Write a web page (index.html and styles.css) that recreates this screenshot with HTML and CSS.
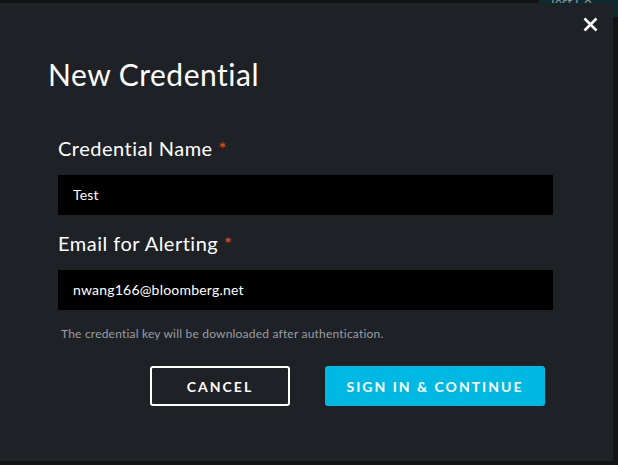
FILE: index.html
```html
<!DOCTYPE html>
<html>
<head>
<meta charset="utf-8">
<link rel="stylesheet" href="styles.css">
</head>
<body>
<div class="backdrop-tab"><span>Test Co</span></div>
<div class="modal">
  <button class="close" aria-label="Close">
    <svg width="15" height="15" viewBox="0 0 15 15"><path d="M1.5 1.5 L13.5 13.5 M13.5 1.5 L1.5 13.5" stroke="#fff" stroke-width="2.6" stroke-linecap="butt"/></svg>
  </button>
  <h1 class="title">New Credential</h1>
  <form class="form">
    <label class="label">Credential Name <span class="req">*</span></label>
    <div class="input">Test</div>
    <label class="label">Email for Alerting <span class="req">*</span></label>
    <div class="input">nwang166@bloomberg.net</div>
    <p class="hint">The credential key will be downloaded after authentication.</p>
    <div class="actions">
      <button type="button" class="btn btn-cancel">CANCEL</button>
      <button type="button" class="btn btn-primary">SIGN IN &amp; CONTINUE</button>
    </div>
  </form>
</div>
</body>
</html>
```
FILE: styles.css
```css
html, body {
  margin: 0;
  padding: 0;
  background: #111315;
  width: 618px;
  height: 465px;
  overflow: hidden;
  font-family: "Lato", "Open Sans", sans-serif;
  color: #fff;
}
.backdrop-tab {
  position: absolute;
  left: 539px;
  top: 0;
  width: 79px;
  height: 17px;
  background: #0f2a2e;
  overflow: hidden;
}
.backdrop-tab span {
  position: relative;
  top: -9px;
  left: 10px;
  font-size: 13px;
  color: #8a9699;
}
.modal {
  position: relative;
  margin-top: 3px;
  width: 613px;
  height: 458px;
  background: #1e2126;
  box-sizing: border-box;
  padding: 51px 48px 0 48px;
}
.close {
  position: absolute;
  right: 15px;
  top: 14px;
  width: 15px;
  height: 15px;
  padding: 0;
  border: 0;
  background: none;
  display: flex;
}
.title {
  margin: 0;
  font-size: 30px;
  font-weight: 400;
  line-height: 40px;
  letter-spacing: 0.5px;
}
.form {
  margin: 41px 0 0 10px;
  width: 495px;
  display: flex;
  flex-direction: column;
}
.label {
  font-size: 20px;
  line-height: 26px;
  margin-bottom: 14px;
  letter-spacing: 0.5px;
}
.req {
  color: #d9541f;
}
.input {
  height: 40px;
  background: #000;
  box-sizing: border-box;
  padding: 0 15px;
  font-size: 14px;
  line-height: 40px;
  letter-spacing: 0.2px;
  color: #fff;
  margin-bottom: 15px;
}
.hint {
  margin: 1px 0 0 3px;
  font-size: 12px;
  line-height: 15px;
  letter-spacing: 0.2px;
  color: #9a9ea3;
}
.actions {
  display: flex;
  justify-content: flex-end;
  gap: 35px;
  padding-right: 8px;
  margin-top: 25px;
}
.btn {
  height: 40px;
  font-family: "Lato", sans-serif;
  font-weight: 700;
  font-size: 14px;
  letter-spacing: 2px;
  color: #fff;
  border-radius: 3px;
  cursor: pointer;
}
.btn-cancel {
  width: 140px;
  background: transparent;
  border: 2px solid #fff;
}
.btn-primary {
  width: 220px;
  background: #00b9e3;
  border: 0;
}
```
